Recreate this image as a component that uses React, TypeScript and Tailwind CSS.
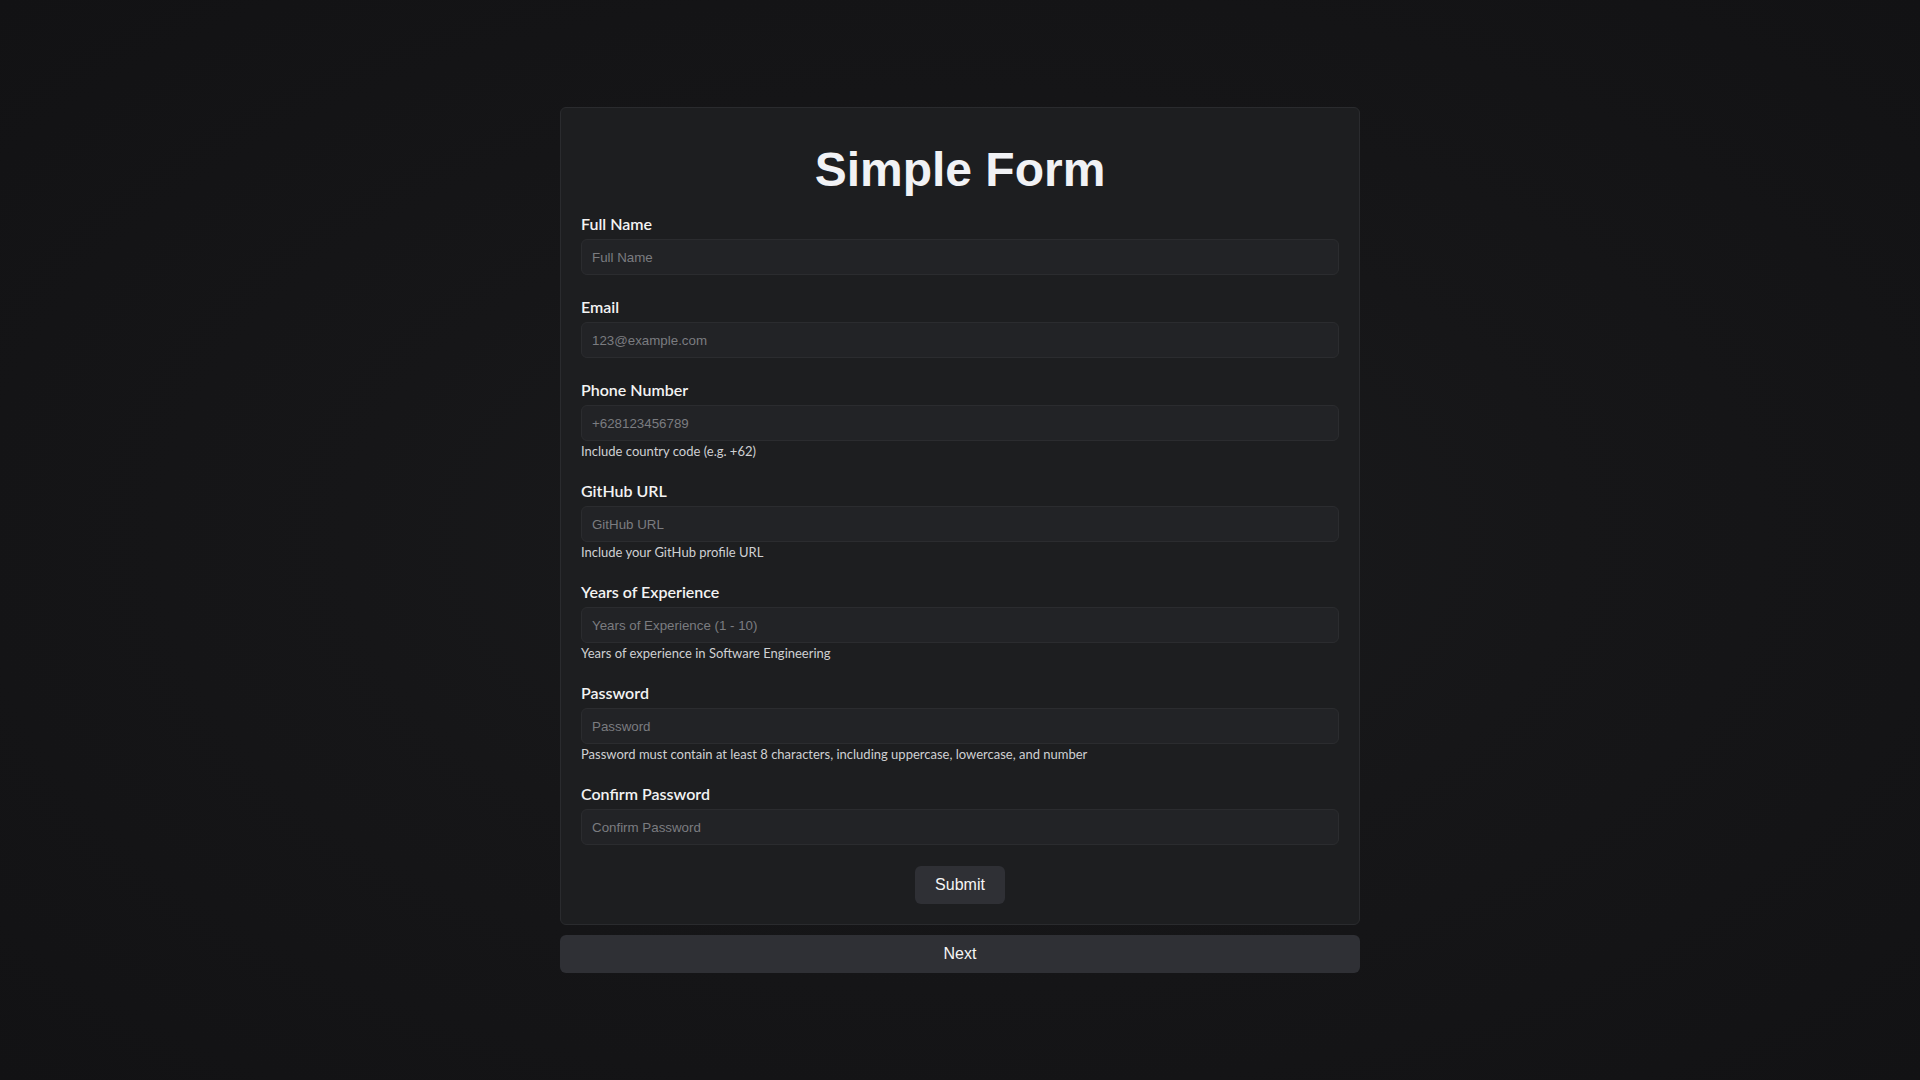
import { useState } from "react";

type Field = {
  id: string;
  label: string;
  placeholder: string;
  type?: string;
  hint?: string;
};

const fields: Field[] = [
  { id: "fullName", label: "Full Name", placeholder: "Full Name" },
  { id: "email", label: "Email", placeholder: "123@example.com", type: "email" },
  {
    id: "phone",
    label: "Phone Number",
    placeholder: "+628123456789",
    hint: "Include country code (e.g. +62)",
  },
  {
    id: "github",
    label: "GitHub URL",
    placeholder: "GitHub URL",
    hint: "Include your GitHub profile URL",
  },
  {
    id: "experience",
    label: "Years of Experience",
    placeholder: "Years of Experience (1 - 10)",
    hint: "Years of experience in Software Engineering",
  },
  {
    id: "password",
    label: "Password",
    placeholder: "Password",
    type: "password",
    hint: "Password must contain at least 8 characters, including uppercase, lowercase, and number",
  },
  {
    id: "confirmPassword",
    label: "Confirm Password",
    placeholder: "Confirm Password",
    type: "password",
  },
];

const App = () => {
  const [values, setValues] = useState<Record<string, string>>({});

  return (
    <div className="flex min-h-screen w-full flex-col items-center bg-[#141416] bg-[radial-gradient(ellipse_at_center,#1a1b1d_0%,#161618_45%,#121214_100%)] pt-[107px] font-['Segoe_UI',Lato,sans-serif]">
      {/* form card */}
      <form
        onSubmit={(e) => e.preventDefault()}
        className="w-[800px] rounded-md border border-[#2a2b2e] bg-[#1d1e20] px-5 pt-5 pb-5"
      >
        <h1 className="mt-[18px] text-center font-['Liberation_Sans',Arial,sans-serif] text-5xl leading-none font-bold text-[#f1f2f5]">
          Simple Form
        </h1>

        <div className="mt-[18px] flex flex-col gap-5">
          {fields.map((field) => (
            <div key={field.id} className="flex flex-col">
              <label
                htmlFor={field.id}
                className="mb-[3px] text-base leading-6 font-semibold text-[#f3f3f3]"
              >
                {field.label}
              </label>
              <input
                id={field.id}
                type={field.type ?? "text"}
                value={values[field.id] ?? ""}
                onChange={(e) =>
                  setValues({ ...values, [field.id]: e.target.value })
                }
                placeholder={field.placeholder}
                className="h-9 w-full rounded-md border border-[#2b2c2f] bg-[#222326] px-2.5 font-['Liberation_Sans',Arial,sans-serif] text-[13.33px] text-[#e5e5e5] outline-none placeholder:text-[#7b7c80]"
              />
              {field.hint && (
                <p className="mt-[3px] text-[13px] leading-[15px] text-[#cfd0d3]">
                  {field.hint}
                </p>
              )}
            </div>
          ))}
        </div>

        {/* submit */}
        <div className="mt-[21px] flex justify-center">
          <button
            type="submit"
            className="h-[38px] cursor-pointer rounded-md bg-[#2f3035] px-5 font-['Liberation_Sans',Arial,sans-serif] text-base text-[#f5f5f5] hover:bg-[#36373c]"
          >
            Submit
          </button>
        </div>
      </form>

      {/* next */}
      <button className="mt-2.5 h-[38px] w-[800px] cursor-pointer rounded-md bg-[#2f3035] font-['Liberation_Sans',Arial,sans-serif] text-base text-[#f5f5f5] hover:bg-[#36373c]">
        Next
      </button>
    </div>
  );
};

export default App;
